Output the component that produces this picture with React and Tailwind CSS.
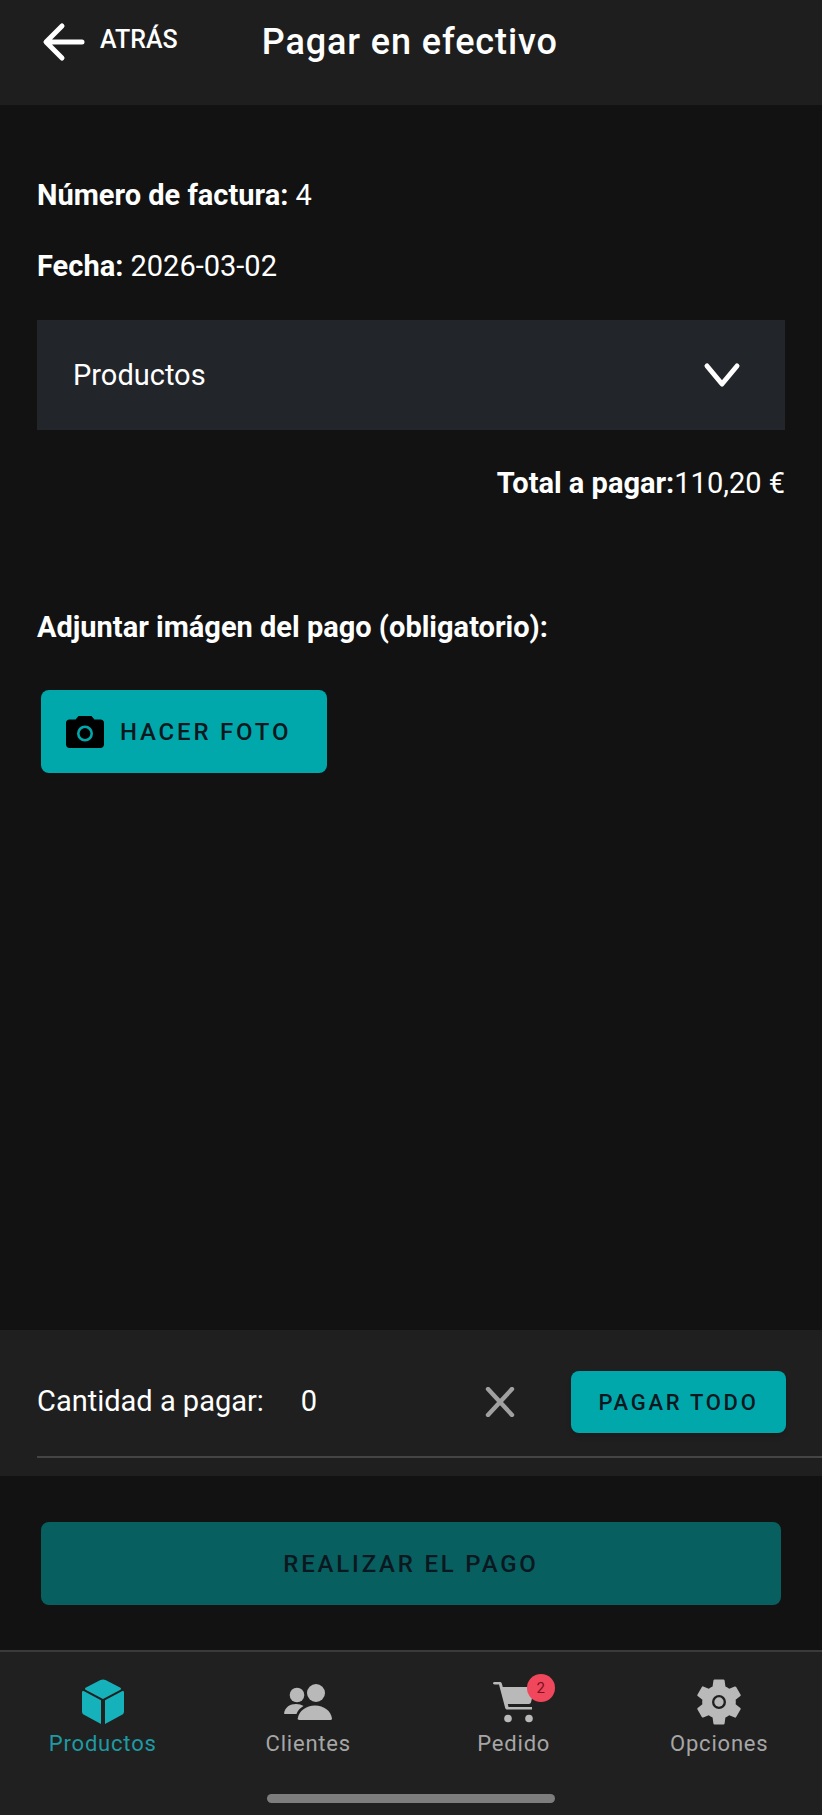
import React from 'react';

function BackIcon() {
    return (
        <svg className="w-[48px] h-[48px] text-white" viewBox="0 0 24 24" fill="none" stroke="currentColor" strokeWidth="2.5" strokeLinecap="round" strokeLinejoin="round">
            <path d="M21.500 12.500H4M11.500 4.500 3.500 12.500l8 8" />
        </svg>
    );
}

function ChevronIcon() {
    return (
        <svg className="w-[40px] h-[40px] text-white" viewBox="0 0 40 40" fill="none" stroke="currentColor" strokeWidth="5" strokeLinecap="round" strokeLinejoin="round">
            <path d="M5 11 20 29 35 11" />
        </svg>
    );
}

function CameraIcon() {
    return (
        <svg className="w-[38px] h-[32px] text-black" viewBox="0 0 38 32" fill="currentColor">
            <path fillRule="evenodd" d="M12.500 0 9.600 3.600H3.400C1.500 3.600 0 5.100 0 7v21.600C0 30.500 1.500 32 3.400 32h31.200c1.900 0 3.400-1.500 3.400-3.400V7c0-1.900-1.500-3.400-3.400-3.400h-6.200L25.500 0h-13zM19 25.500a8 8 0 1 0 0-16 8 8 0 0 0 0 16z" />
            <circle cx="19" cy="17.500" r="5.400" />
        </svg>
    );
}

function CloseIcon() {
    return (
        <svg className="w-[30px] h-[30px] text-[#a0a0a0]" viewBox="0 0 30 30" fill="none" stroke="currentColor" strokeWidth="4.4" strokeLinecap="round">
            <path d="M3 2 27 28M27 2 3 28" />
        </svg>
    );
}

function CubeIcon() {
    return (
        <svg className="w-[44px] h-[46px] text-[#16b2bb]" viewBox="0 0 44 46" fill="currentColor">
            <path d="M19.500 1 5 8.400c-1.300.7-1.300 1.900 0 2.600l17 9 17-9c1.300-.7 1.300-1.900 0-2.600L24.500 1c-1.700-.8-3.300-.8-5 0z" />
            <path d="M1 13.500c0-1.200 1.100-1.700 2.100-1.200L20 21.300V45L3 35.800c-1.300-.7-2-1.800-2-3.300v-19z" />
            <path d="M43 13.500c0-1.200-1.100-1.700-2.100-1.200L24 21.300V45l17-9.200c1.300-.7 2-1.800 2-3.300v-19z" />
        </svg>
    );
}

function PeopleIcon() {
    return (
        <svg className="w-[48px] h-[36px] text-[#b9b9b9]" viewBox="0 0 48 36" fill="currentColor">
            <circle cx="13" cy="11" r="7.300" />
            <circle cx="32" cy="9" r="9" />
            <path d="M0 29.500C1 23 6 20 12 20c3 0 5.500.7 7.500 2-3.500 2-6 4.800-7 8H1.500C.4 30 0 29.800 0 29.500z" />
            <path d="M15 36c-1 0-1.500-.6-1.300-1.600C15 27 22 21.500 31 21.500s16 5.500 17 12.900c.1 1-.4 1.600-1.300 1.600H15z" />
        </svg>
    );
}

function CartIcon() {
    return (
        <svg className="w-[42px] h-[42px] text-[#b9b9b9]" viewBox="0 0 42 42" fill="currentColor">
            <path d="M1.500 1h5.300c1 0 1.700.5 2 1.500L9.800 6h29.700c1.200 0 1.900.9 1.600 2l-3 13c-.3 1.200-1 2-2.300 2H14.800l.7 3H39v2.500H14c-.9 0-1.600-.6-1.800-1.500L6 3.500H1.500C.7 3.500 0 3 0 2.300S.7 1 1.500 1z" />
            <circle cx="15" cy="37.500" r="3.800" />
            <circle cx="36" cy="37.500" r="3.800" />
        </svg>
    );
}

function GearIcon() {
    return (
        <svg className="w-[56px] h-[56px] text-[#b9b9b9]" viewBox="0 0 24 24" fill="currentColor">
            <path d="M19.140 12.940c.04-.3.06-.61.06-.94 0-.32-.02-.64-.07-.94l2.030-1.580c.18-.14.23-.41.12-.61l-1.920-3.320c-.12-.22-.37-.29-.59-.22l-2.390.96c-.5-.38-1.030-.7-1.620-.94l-.36-2.540c-.04-.24-.24-.41-.48-.41h-3.840c-.24 0-.43.17-.47.41l-.36 2.540c-.59.24-1.130.57-1.620.94l-2.390-.96c-.22-.08-.47 0-.59.22L2.740 8.870c-.12.21-.08.47.12.61l2.030 1.580c-.05.3-.09.63-.09.94s.02.64.07.94l-2.030 1.580c-.18.14-.23.41-.12.61l1.920 3.320c.12.22.37.29.59.22l2.390-.96c.5.38 1.030.7 1.620.94l.36 2.540c.05.24.24.41.48.41h3.840c.24 0 .44-.17.47-.41l.36-2.540c.59-.24 1.130-.56 1.620-.94l2.390.96c.22.08.47 0 .59-.22l1.920-3.320c.12-.22.07-.47-.12-.61l-2.010-1.580z" />
            <circle cx="12" cy="12" r="3" fill="#202020" />
            <circle cx="12" cy="12" r="2" />
        </svg>
    );
}

function NavItem({ icon, label, active, badge }) {
    return (
        <div className="flex-1 flex flex-col items-center">
            <div className="relative h-[50px] flex items-center justify-center">
                { icon }
                { badge && (
                    <span className="absolute -top-[3px] -right-[20px] w-[28px] h-[28px] rounded-full bg-[#f0475c] text-[#7a1020] text-[15px] flex items-center justify-center">
                        { badge }
                    </span>
                ) }
            </div>
            <span className={ `mt-[3px] text-[22px] leading-[28px] tracking-[0.8px] ${active ? 'text-[#1f9aa2]' : 'text-[#a6a6a6]'}` }>
                { label }
            </span>
        </div>
    );
}

export default function App() {
    return (
        <div className="w-[822px] h-[1815px] flex flex-col bg-[#121212] font-['Roboto',sans-serif] text-white overflow-hidden">
            <header className="h-[105px] shrink-0 bg-[#1e1e1e] flex items-start pl-[39px] pt-[17px]">
                <BackIcon />
                <span className="ml-[13px] mt-[7px] text-[25px] leading-[32px] font-medium">ATRÁS</span>
                <h1 className="ml-[84px] mt-[3px] text-[36px] leading-[44px] font-medium tracking-[0.9px]">Pagar en efectivo</h1>
            </header>

            <main className="flex-1 px-[37px] pt-[73px]">
                <p className="text-[29px] leading-[34px]"><b className="font-bold">Número de factura:</b> 4</p>
                <p className="mt-[37px] text-[29px] leading-[34px]"><b className="font-bold">Fecha:</b> 2026-03-02</p>
                <div className="mt-[37px] h-[110px] bg-[#22252a] flex items-center justify-between pl-[36px] pr-[43px]">
                    <span className="text-[29px] pt-[1px]">Productos</span>
                    <ChevronIcon />
                </div>
                <p className="mt-[36px] text-[29px] leading-[34px] text-right"><b className="font-bold">Total a pagar:</b>110,20 €</p>
                <p className="mt-[110px] text-[29px] leading-[34px] font-bold">Adjuntar imágen del pago (obligatorio):</p>
                <button className="mt-[46px] ml-[4px] w-[286px] h-[83px] rounded-[8px] bg-[#00a8ac] flex items-center pl-[25px] text-[#0c1820]">
                    <CameraIcon />
                    <span className="ml-[16px] text-[24px] font-medium tracking-[2.800px]">HACER FOTO</span>
                </button>
            </main>

            <section className="h-[146px] shrink-0 bg-[#1f1f1f] pl-[37px] flex flex-col">
                <div className="flex-1 flex items-center pr-[36px] pt-[18px]">
                    <span className="text-[29px]">Cantidad a pagar:</span>
                    <span className="ml-[37px] text-[29px]">0</span>
                    <span className="ml-auto mr-[56px] flex"><CloseIcon /></span>
                    <button className="w-[215px] h-[62px] rounded-[8px] bg-[#00a8ac] shadow-md text-[#0c1820] text-[22px] font-medium tracking-[2.700px]">PAGAR TODO</button>
                </div>
                <div className="h-[2px] bg-[#444444] mb-[18px]"></div>
            </section>

            <div className="h-[174px] shrink-0 px-[41px] pt-[46px]">
                <button className="w-full h-[83px] rounded-[8px] bg-[#075f60] text-[#0c1820] text-[24px] font-medium tracking-[2.800px]">REALIZAR EL PAGO</button>
            </div>

            <nav className="h-[165px] shrink-0 bg-[#202020] border-t-2 border-[#3a3a3a] flex flex-col">
                <div className="flex pt-[25px]">
                    <NavItem icon={ <CubeIcon /> } label="Productos" active />
                    <NavItem icon={ <PeopleIcon /> } label="Clientes" />
                    <NavItem icon={ <CartIcon /> } label="Pedido" badge="2" />
                    <NavItem icon={ <GearIcon /> } label="Opciones" />
                </div>
                <div className="mt-auto mb-[12px] mx-auto w-[288px] h-[9px] rounded-full bg-[#7d7d7d]"></div>
            </nav>
        </div>
    );
}
